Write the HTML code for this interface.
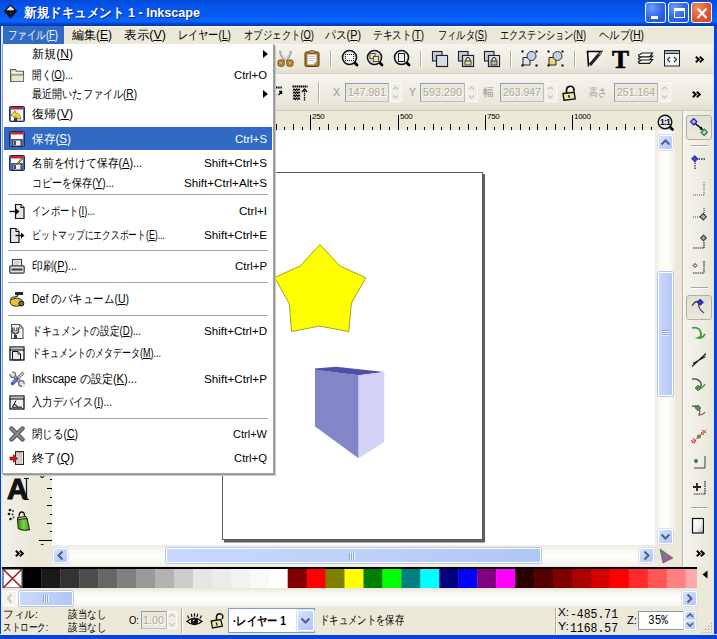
<!DOCTYPE html>
<html><head><meta charset="utf-8">
<style>
*{box-sizing:border-box}
html,body{margin:0;padding:0}
body{width:717px;height:639px;position:relative;overflow:hidden;background:#ECE9D8;font-family:"Liberation Sans",sans-serif;font-size:12px;color:#000}
.a{position:absolute}
i{font-style:normal}
u{text-decoration:underline}
.t{position:absolute;white-space:nowrap;line-height:1;transform-origin:0 0}
#title{left:0;top:0;width:717px;height:26px;background:linear-gradient(#0348d6 0px,#0450e4 3px,#0556ee 8px,#0659f2 15px,#0a63fb 19px,#0a62f8 22px,#0448d0 23.5px,#0036b0 26px)}
#menubar{left:2px;top:26px;width:711px;height:18px;background:linear-gradient(#fbfaf6 0px,#ECE9D8 2px)}
.tb{background:linear-gradient(#F6F5EF,#EAE7DB 80%,#E2DECF)}
#tb1{left:2px;top:44px;width:711px;height:30px;border-bottom:1px solid #d8d4c4}
#tb2{left:2px;top:74px;width:711px;height:37px;border-bottom:1px solid #d2cebd}
#hruler{left:52px;top:111px;width:603px;height:19px;background:#ECE9D8}
#vruler{left:34px;top:130px;width:18px;height:415px;background:#ECE9D8}
#canvas{left:52px;top:130px;width:603px;height:415px;background:#fff}
#vscroll{left:655px;top:130px;width:20px;height:415px;background:linear-gradient(90deg,#F3F1EC,#FEFEFB 40%,#FEFEFB 60%,#F0EEE6)}
#hscroll{left:52px;top:545px;width:603px;height:18px;background:linear-gradient(#F3F1EC,#FEFEFB 40%,#FEFEFB 60%,#F0EEE6)}
#palette{left:2px;top:567px;width:695px;height:21px;background:#000}
#status{left:2px;top:606px;width:711px;height:29px;background:#ECE9D8}
#bl{left:0;top:26px;width:2px;height:613px;background:#0A3FCC;border-right:1px solid #d4ecff}
#br{left:713px;top:26px;width:4px;height:613px;background:#0842DE;border-left:1px solid #d4ecff}
#bb{left:0;top:634px;width:717px;height:5px;background:#0842DE;border-top:1px solid #d4ecff}
#menu{left:2px;top:44px;width:272px;height:430px;background:#fff;border:1px solid #a0a4a4;border-top:0;box-shadow:1px 1px 0 #9a9a9a,2px 2px 0 #c8c8c8}
.wb{width:21px;height:21px;border:1px solid #fff;border-radius:3px;background:radial-gradient(circle at 30% 25%,#6b9cfb,#2f66e8 55%,#1c4fd8)}
.wc{background:radial-gradient(circle at 30% 25%,#f08c68,#e0552e 55%,#cc4420)}
.sc{font-size:11px}
.sepv{width:2px;border-left:1px solid #b2af9f;border-right:1px solid #fff}
.chev{font-size:15px;font-weight:bold}
.lab{font-size:11px;color:#9d9a8a}
.fld{border:1px solid #8d9fb4;border-right-color:#b5c0cc;border-bottom-color:#b5c0cc;background:#EBE8DA}
.fv{font-size:11px;color:#aca899;text-shadow:1px 1px 0 #fff}
.spin{width:12px;height:19px;border:1px solid #fbfbf8;background:#f1efe6}
.abtn{border:1px solid #fff;border-radius:2px;background:linear-gradient(135deg,#d8e4fc,#c1d3fb 50%,#b4c8f6);box-shadow:0 0 0 1px #d6dff5}
.abtn.dis{background:#f4f3ee;box-shadow:none}
.thumb{border:1px solid #fff;border-radius:2px;background:linear-gradient(90deg,#c9d8fc,#bccff8 60%,#b2c6f5);box-shadow:0 0 0 1px #b5c6ef}
.pbtn{border:1px solid #b5b1a0;border-radius:3px;background:linear-gradient(#e2dfd2,#ebe9df)}
.st{font-size:11px}
.mono{font-family:"Liberation Mono",monospace;font-size:12px}
</style></head><body>
<div id="title" class="a">
<svg class="a" style="left:3px;top:4px" width="15" height="15" viewBox="0 0 15 15"><path d="M7.5 0.5 L14 7 L7.5 14.5 L1 7Z" fill="#0d0d12" stroke="#06207a" stroke-width=".8"/><path d="M7.5 2 L11.3 5.8 L10 6.4 L8.8 5.9 L7.5 6.8 L6.2 5.9 L5 6.4 L3.7 5.8Z" fill="#e8e8e0"/><path d="M5 8 Q7.5 9.5 10 8 L7.5 11Z" fill="#2e2e28"/></svg>
<div class="t" style="left:24px;top:6px;font-size:13px;font-weight:bold;color:#fff;text-shadow:1px 1px 0 #0a2a8a;--w:176">新規ドキュメント 1 - Inkscape</div>
<div class="a wb" style="left:645px;top:2px"><div class="a" style="left:5px;top:13px;width:7px;height:3px;background:#fff"></div></div>
<div class="a wb" style="left:668px;top:2px"><div class="a" style="left:5px;top:5px;width:11px;height:10px;border:1px solid #fff;border-top-width:3px"></div></div>
<div class="a wb wc" style="left:691px;top:2px"><svg class="a" style="left:4px;top:5px" width="12" height="11" viewBox="0 0 12 11"><path d="M1.5 0.5 L10.5 10 M10.5 0.5 L1.5 10" stroke="#fff" stroke-width="2.2"/></svg></div>
</div>
<div id="menubar" class="a">
<div class="a" style="left:1px;top:0;width:61px;height:18px;background:#316AC5"></div>
<i class="t" style="left:6px;top:3px;--w:50;color:#fff">ファイル(<u>F</u>)</i>
<i class="t" style="left:70px;top:3px;--w:40">編集(<u>E</u>)</i>
<i class="t" style="left:122px;top:3px;--w:42">表示(<u>V</u>)</i>
<i class="t" style="left:176px;top:3px;--w:53">レイヤー(<u>L</u>)</i>
<i class="t" style="left:242px;top:3px;--w:70">オブジェクト(<u>O</u>)</i>
<i class="t" style="left:323px;top:3px;--w:36">パス(<u>P</u>)</i>
<i class="t" style="left:371px;top:3px;--w:51">テキスト(<u>T</u>)</i>
<i class="t" style="left:436px;top:3px;--w:49">フィルタ(<u>S</u>)</i>
<i class="t" style="left:498px;top:3px;--w:86">エクステンション(<u>N</u>)</i>
<i class="t" style="left:597px;top:3px;--w:45">ヘルプ(<u>H</u>)</i>
</div>
<div id="tb1" class="a tb"></div>
<div id="tb2" class="a tb"></div>
<div id="hruler" class="a"></div>
<!--TB-->
<div class="a sepv" style="left:330px;top:51px;height:16px"></div><div class="a sepv" style="left:420px;top:51px;height:16px"></div><div class="a sepv" style="left:510px;top:51px;height:16px"></div><div class="a sepv" style="left:574px;top:51px;height:16px"></div><svg class="a" style="left:277px;top:50px" width="17" height="17" viewBox="0 0 17 17"><path d="M3.5 1 Q3 5 8.5 10.5 M13.5 1 Q14 5 8.5 10.5" fill="none" stroke="#8d929c" stroke-width="2.4"/><path d="M3.8 1.8 Q3.6 5 8.5 10 M13.2 1.8 Q13.4 5 8.5 10" fill="none" stroke="#f2f4f8" stroke-width=".9"/><rect x="1" y="10" width="6.2" height="6.2" rx="1.8" fill="#c89a30" stroke="#6a4a0a" stroke-width="1"/><rect x="9.8" y="10" width="6.2" height="6.2" rx="1.8" fill="#c89a30" stroke="#6a4a0a" stroke-width="1"/><circle cx="4.1" cy="13.1" r="1.3" fill="#f8e6a0" stroke="#6a4a0a" stroke-width=".6"/><circle cx="12.9" cy="13.1" r="1.3" fill="#f8e6a0" stroke="#6a4a0a" stroke-width=".6"/></svg><svg class="a" style="left:304px;top:50px" width="16" height="17" viewBox="0 0 16 17"><rect x="1" y="2" width="14" height="14.5" rx="1.5" fill="#a87a30" stroke="#5a3c0c" stroke-width="1"/><path d="M3.5 4.5h9v7.5l-2.5 2.5h-6.5z" fill="#ffffff"/><path d="M12.5 12 L10 14.5 L10 12Z" fill="#c8c8c0"/><rect x="5" y="0.8" width="6" height="2.6" rx="1" fill="#caa870" stroke="#5a3c0c" stroke-width=".8"/><path d="M5 6.5h6M5 8.5h6M5 10.5h4.5" stroke="#9aa6b4" stroke-width=".6"/></svg><svg class="a" style="left:341px;top:49px" width="18" height="18" viewBox="0 0 18 18"><path d="M13.5 13.5 L16 16" stroke="#000" stroke-width="2.8" stroke-linecap="round"/><circle cx="8.5" cy="8.5" r="7" fill="#e6e9f2" stroke="#111" stroke-width="1.6"/><rect x="4" y="5" width="9" height="7" fill="#f6f8fc"/><rect x="4" y="5" width="1" height="1" fill="#111"/><rect x="4" y="11" width="1" height="1" fill="#111"/><rect x="6" y="5" width="1" height="1" fill="#111"/><rect x="6" y="11" width="1" height="1" fill="#111"/><rect x="8" y="5" width="1" height="1" fill="#111"/><rect x="8" y="11" width="1" height="1" fill="#111"/><rect x="10" y="5" width="1" height="1" fill="#111"/><rect x="10" y="11" width="1" height="1" fill="#111"/><rect x="12" y="5" width="1" height="1" fill="#111"/><rect x="12" y="11" width="1" height="1" fill="#111"/><rect x="4" y="7" width="1" height="1" fill="#111"/><rect x="4" y="9" width="1" height="1" fill="#111"/><rect x="12" y="7" width="1" height="1" fill="#111"/><rect x="12" y="9" width="1" height="1" fill="#111"/></svg><svg class="a" style="left:366px;top:49px" width="18" height="18" viewBox="0 0 18 18"><path d="M13.5 13.5 L16 16" stroke="#000" stroke-width="2.8" stroke-linecap="round"/><circle cx="8.5" cy="8.5" r="7" fill="#e6e9f2" stroke="#111" stroke-width="1.6"/><circle cx="8.5" cy="8.5" r="6" fill="#c9cde8"/><rect x="4" y="4.5" width="5" height="5" fill="#f2e58a" stroke="#333" stroke-width=".8"/><rect x="7.5" y="7.5" width="5" height="5" fill="#f2e58a" stroke="#333" stroke-width=".8"/></svg><svg class="a" style="left:393px;top:49px" width="18" height="18" viewBox="0 0 18 18"><path d="M13.5 13.5 L16 16" stroke="#000" stroke-width="2.8" stroke-linecap="round"/><circle cx="8.5" cy="8.5" r="7" fill="#e6e9f2" stroke="#111" stroke-width="1.6"/><rect x="5.5" y="4.5" width="6" height="8" fill="#f2f4f8" stroke="#222" stroke-width="1"/></svg><svg class="a" style="left:431px;top:50px" width="18" height="18" viewBox="0 0 18 18"><rect x="1.5" y="1.5" width="9.5" height="9.5" fill="#c5ccd8" stroke="#222" stroke-width="1.1"/><rect x="5.5" y="5.5" width="11" height="11" fill="#d4dcea" stroke="#222" stroke-width="1.2"/><path d="M6.5 6.5h9v9" fill="none" stroke="#fff" stroke-width=".6" opacity=".7"/></svg><svg class="a" style="left:457px;top:50px" width="18" height="18" viewBox="0 0 18 18"><rect x="1.5" y="1.5" width="9.5" height="9.5" fill="#c5ccd8" stroke="#222" stroke-width="1.1"/><rect x="5.5" y="5.5" width="11" height="11" fill="#d4dcea" stroke="#222" stroke-width="1.2"/><path d="M6.5 6.5h9v9" fill="none" stroke="#fff" stroke-width=".6" opacity=".7"/><path d="M9 11v-1.5a2 2 0 0 1 4 0v1.5" fill="none" stroke="#222" stroke-width="1"/><rect x="8" y="11" width="6" height="4" fill="#f0e070" stroke="#222" stroke-width=".8"/></svg><svg class="a" style="left:483px;top:50px" width="18" height="18" viewBox="0 0 18 18"><rect x="1.5" y="1.5" width="9.5" height="9.5" fill="#c5ccd8" stroke="#222" stroke-width="1.1"/><rect x="5.5" y="5.5" width="11" height="11" fill="#d4dcea" stroke="#222" stroke-width="1.2"/><path d="M6.5 6.5h9v9" fill="none" stroke="#fff" stroke-width=".6" opacity=".7"/><path d="M9 11v-1.5a2 2 0 0 1 4 0v1.5" fill="none" stroke="#222" stroke-width="1"/><rect x="8" y="11" width="6" height="4" fill="#a8c888" stroke="#222" stroke-width=".8"/></svg><svg class="a" style="left:521px;top:50px" width="17" height="17" viewBox="0 0 17 17"><path d="M2 7.5h7v7.5h-7z" fill="#dfe5ee" stroke="#222" stroke-width="1"/><circle cx="10.5" cy="6" r="4.5" fill="#c3d0e6" stroke="#333" stroke-width="1"/><rect x="0.5" y="0.5" width="2" height="2" fill="#000"/><rect x="14.5" y="0.5" width="2" height="2" fill="#000"/><rect x="0.5" y="14.5" width="2" height="2" fill="#000"/><rect x="14.5" y="14.5" width="2" height="2" fill="#000"/></svg><svg class="a" style="left:547px;top:50px" width="17" height="17" viewBox="0 0 17 17"><path d="M2 7.5h7v7.5h-7z" fill="#f0d878" stroke="#222" stroke-width="1"/><circle cx="10.5" cy="6" r="4.5" fill="#c3d0e6" stroke="#333" stroke-width="1"/><rect x="0.5" y="0.5" width="2" height="2" fill="#000"/><rect x="14.5" y="0.5" width="2" height="2" fill="#000"/><rect x="0.5" y="14.5" width="2" height="2" fill="#000"/><rect x="14.5" y="14.5" width="2" height="2" fill="#000"/></svg><svg class="a" style="left:586px;top:50px" width="17" height="17" viewBox="0 0 17 17"><path d="M1.5 1.5h14l-13 14z" fill="#fdfdfd" stroke="#000" stroke-width="1.6"/><path d="M15.5 1.5 L2.5 15.5 L15.5 15.5z" fill="#eee"/><path d="M15 2 L4 15" stroke="#222" stroke-width="3"/><path d="M15.5 1.5 L12 5 L15 4z" fill="#e8c020"/></svg><div class="t" style="left:612px;top:47px;font-family:'Liberation Serif',serif;font-weight:bold;font-size:25.5px;-webkit-text-stroke:.6px #000">T</div><svg class="a" style="left:637px;top:50px" width="17" height="17" viewBox="0 0 17 17"><path d="M1.5 11.7 L5.2 9.5 H15.5 L12.5 13.3 H2.2z" fill="#fafafa" stroke="#1a1a1a" stroke-width="1.2"/><path d="M1.5 8.4 L5.2 6.2 H15.5 L12.5 10.0 H2.2z" fill="#fafafa" stroke="#1a1a1a" stroke-width="1.2"/><path d="M1.5 5.2 L5.2 3 H15.5 L12.5 6.8 H2.2z" fill="#fafafa" stroke="#1a1a1a" stroke-width="1.2"/></svg><svg class="a" style="left:664px;top:50px" width="17" height="17" viewBox="0 0 17 17"><rect x="0.5" y="0.5" width="15" height="15.5" fill="#f4f4f6" stroke="#222" stroke-width="1"/><rect x="1" y="1" width="14" height="2" fill="#9aa8c0"/><path d="M1 3.5h14" stroke="#222" stroke-width=".9"/><path d="M6 7 L3.5 9.5 L6 12 M10 7 L12.5 9.5 L10 12" fill="none" stroke="#333" stroke-width="1.2"/></svg><svg class="a" style="left:695px;top:56px" width="9" height="7" viewBox="0 0 9 7"><path d="M0.8 0.8 L3.8 3.5 L0.8 6.2 M4.8 0.8 L7.8 3.5 L4.8 6.2" fill="none" stroke="#000" stroke-width="1.9"/></svg><div class="a sepv" style="left:318px;top:82px;height:21px"></div><svg class="a" style="left:274px;top:86px" width="9" height="12" viewBox="0 0 9 12"><path d="M0 1.5h8" stroke="#000" stroke-width="2" stroke-dasharray="1.2 .6"/><path d="M1 10 L2 8.5 M4.5 9 L7.5 6 M5 5.5h2.5v2.5" stroke="#000" stroke-width="1.3" fill="none"/></svg><svg class="a" style="left:292px;top:85px" width="16" height="16" viewBox="0 0 16 16"><path d="M0.5 1.5h15" stroke="#000" stroke-width="2" stroke-dasharray="1.5 .5"/><path d="M1 5.5 l1.2 -1.5 1.2 1.5 1.2 -1.5 1.2 1.5 1.2 -1.5 1.2 1.5 M1 8.5 l1.2 -1.5 1.2 1.5 1.2 -1.5 1.2 1.5 1.2 -1.5 1.2 1.5 M1 11.5 l1.2 -1.5 1.2 1.5 1.2 -1.5 1.2 1.5 1.2 -1.5 1.2 1.5 M1 14.5 l1.2 -1.5 1.2 1.5 1.2 -1.5 1.2 1.5 1.2 -1.5 1.2 1.5 " fill="none" stroke="#000" stroke-width="1.1"/><path d="M12.5 15.5V5" stroke="#000" stroke-width="1.3" stroke-dasharray="1.5 .6"/><path d="M10 7 L12.5 4 L15 7" fill="none" stroke="#000" stroke-width="1.3"/></svg><i class="t lab" style="left:333px;top:87px;--w:7">X</i><div class="a fld" style="left:345px;top:83px;width:44px;height:19px"></div><i class="t fv" style="left:348px;top:87px;--w:38">147.981</i><div class="a spin" style="left:390px;top:83px"></div><svg class="a" style="left:392px;top:85px" width="7" height="15" viewBox="0 0 7 15"><path d="M1 4.5 L3.5 2 L6 4.5 M1 10.5 L3.5 13 L6 10.5" fill="none" stroke="#c8c6ba" stroke-width="1.2"/></svg><i class="t lab" style="left:409px;top:87px;--w:7">Y</i><div class="a fld" style="left:420px;top:83px;width:45px;height:19px"></div><i class="t fv" style="left:423px;top:87px;--w:39">593.290</i><div class="a spin" style="left:466px;top:83px"></div><svg class="a" style="left:468px;top:85px" width="7" height="15" viewBox="0 0 7 15"><path d="M1 4.5 L3.5 2 L6 4.5 M1 10.5 L3.5 13 L6 10.5" fill="none" stroke="#c8c6ba" stroke-width="1.2"/></svg><i class="t lab" style="left:483px;top:87px;--w:11">幅</i><div class="a fld" style="left:500px;top:83px;width:44px;height:19px"></div><i class="t fv" style="left:503px;top:87px;--w:38">263.947</i><div class="a spin" style="left:545px;top:83px"></div><svg class="a" style="left:547px;top:85px" width="7" height="15" viewBox="0 0 7 15"><path d="M1 4.5 L3.5 2 L6 4.5 M1 10.5 L3.5 13 L6 10.5" fill="none" stroke="#c8c6ba" stroke-width="1.2"/></svg><i class="t lab" style="left:589px;top:87px;--w:17">高さ</i><div class="a fld" style="left:614px;top:83px;width:44px;height:19px"></div><i class="t fv" style="left:617px;top:87px;--w:38">251.164</i><div class="a spin" style="left:659px;top:83px"></div><svg class="a" style="left:661px;top:85px" width="7" height="15" viewBox="0 0 7 15"><path d="M1 4.5 L3.5 2 L6 4.5 M1 10.5 L3.5 13 L6 10.5" fill="none" stroke="#c8c6ba" stroke-width="1.2"/></svg><svg class="a" style="left:562px;top:85px" width="15" height="16" viewBox="0 0 15 16"><path d="M4.5 8 V5 A3.8 3.8 0 0 1 12 4.2 L12 6.5" fill="none" stroke="#111" stroke-width="1.7"/><path d="M1 8.5 L12.2 7.2 L13.2 14 L2 15.3Z" fill="#ede59a" stroke="#111" stroke-width="1.4"/><path d="M6.8 10.2 L7.2 12.6" stroke="#222" stroke-width="1.6"/></svg><svg class="a" style="left:692px;top:91px" width="9" height="7" viewBox="0 0 9 7"><path d="M0.8 0.8 L3.8 3.5 L0.8 6.2 M4.8 0.8 L7.8 3.5 L4.8 6.2" fill="none" stroke="#000" stroke-width="1.9"/></svg>
<!--/TB-->
<div id="vruler" class="a"></div>
<div id="canvas" class="a"></div>
<!--CV-->
<svg class="a" style="left:52px;top:111px" width="603" height="19" viewBox="0 0 603 19"><path d="M5.5 16V19" stroke="#000" stroke-width="1"/><path d="M14.5 13V19" stroke="#000" stroke-width="1"/><path d="M23.5 16V19" stroke="#000" stroke-width="1"/><path d="M32.5 13V19" stroke="#000" stroke-width="1"/><path d="M40.5 16V19" stroke="#000" stroke-width="1"/><path d="M49.5 13V19" stroke="#000" stroke-width="1"/><path d="M58.5 16V19" stroke="#000" stroke-width="1"/><path d="M66.5 13V19" stroke="#000" stroke-width="1"/><path d="M75.5 16V19" stroke="#000" stroke-width="1"/><path d="M84.5 4V19" stroke="#000" stroke-width="1"/><text x="86.0" y="7.8" font-size="8" font-family="Liberation Sans" letter-spacing="-0.3">-250</text><path d="M93.5 16V19" stroke="#000" stroke-width="1"/><path d="M101.5 13V19" stroke="#000" stroke-width="1"/><path d="M110.5 16V19" stroke="#000" stroke-width="1"/><path d="M119.5 13V19" stroke="#000" stroke-width="1"/><path d="M128.5 16V19" stroke="#000" stroke-width="1"/><path d="M136.5 13V19" stroke="#000" stroke-width="1"/><path d="M145.5 16V19" stroke="#000" stroke-width="1"/><path d="M154.5 13V19" stroke="#000" stroke-width="1"/><path d="M162.5 16V19" stroke="#000" stroke-width="1"/><path d="M171.5 4V19" stroke="#000" stroke-width="1"/><text x="173.0" y="7.8" font-size="8" font-family="Liberation Sans" letter-spacing="-0.3">0</text><path d="M180.5 16V19" stroke="#000" stroke-width="1"/><path d="M189.5 13V19" stroke="#000" stroke-width="1"/><path d="M197.5 16V19" stroke="#000" stroke-width="1"/><path d="M206.5 13V19" stroke="#000" stroke-width="1"/><path d="M215.5 16V19" stroke="#000" stroke-width="1"/><path d="M224.5 13V19" stroke="#000" stroke-width="1"/><path d="M232.5 16V19" stroke="#000" stroke-width="1"/><path d="M241.5 13V19" stroke="#000" stroke-width="1"/><path d="M250.5 16V19" stroke="#000" stroke-width="1"/><path d="M258.5 4V19" stroke="#000" stroke-width="1"/><text x="260.0" y="7.8" font-size="8" font-family="Liberation Sans" letter-spacing="-0.3">250</text><path d="M267.5 16V19" stroke="#000" stroke-width="1"/><path d="M276.5 13V19" stroke="#000" stroke-width="1"/><path d="M285.5 16V19" stroke="#000" stroke-width="1"/><path d="M293.5 13V19" stroke="#000" stroke-width="1"/><path d="M302.5 16V19" stroke="#000" stroke-width="1"/><path d="M311.5 13V19" stroke="#000" stroke-width="1"/><path d="M320.5 16V19" stroke="#000" stroke-width="1"/><path d="M328.5 13V19" stroke="#000" stroke-width="1"/><path d="M337.5 16V19" stroke="#000" stroke-width="1"/><path d="M346.5 4V19" stroke="#000" stroke-width="1"/><text x="348.0" y="7.8" font-size="8" font-family="Liberation Sans" letter-spacing="-0.3">500</text><path d="M355.5 16V19" stroke="#000" stroke-width="1"/><path d="M363.5 13V19" stroke="#000" stroke-width="1"/><path d="M372.5 16V19" stroke="#000" stroke-width="1"/><path d="M381.5 13V19" stroke="#000" stroke-width="1"/><path d="M389.5 16V19" stroke="#000" stroke-width="1"/><path d="M398.5 13V19" stroke="#000" stroke-width="1"/><path d="M407.5 16V19" stroke="#000" stroke-width="1"/><path d="M416.5 13V19" stroke="#000" stroke-width="1"/><path d="M424.5 16V19" stroke="#000" stroke-width="1"/><path d="M433.5 4V19" stroke="#000" stroke-width="1"/><text x="435.0" y="7.8" font-size="8" font-family="Liberation Sans" letter-spacing="-0.3">750</text><path d="M442.5 16V19" stroke="#000" stroke-width="1"/><path d="M451.5 13V19" stroke="#000" stroke-width="1"/><path d="M459.5 16V19" stroke="#000" stroke-width="1"/><path d="M468.5 13V19" stroke="#000" stroke-width="1"/><path d="M477.5 16V19" stroke="#000" stroke-width="1"/><path d="M485.5 13V19" stroke="#000" stroke-width="1"/><path d="M494.5 16V19" stroke="#000" stroke-width="1"/><path d="M503.5 13V19" stroke="#000" stroke-width="1"/><path d="M512.5 16V19" stroke="#000" stroke-width="1"/><path d="M520.5 4V19" stroke="#000" stroke-width="1"/><text x="522.0" y="7.8" font-size="8" font-family="Liberation Sans" letter-spacing="-0.3">1000</text><path d="M529.5 16V19" stroke="#000" stroke-width="1"/><path d="M538.5 13V19" stroke="#000" stroke-width="1"/><path d="M547.5 16V19" stroke="#000" stroke-width="1"/><path d="M555.5 13V19" stroke="#000" stroke-width="1"/><path d="M564.5 16V19" stroke="#000" stroke-width="1"/><path d="M573.5 13V19" stroke="#000" stroke-width="1"/><path d="M582.5 16V19" stroke="#000" stroke-width="1"/><path d="M590.5 13V19" stroke="#000" stroke-width="1"/><path d="M599.5 16V19" stroke="#000" stroke-width="1"/></svg><svg class="a" style="left:34px;top:130px" width="18" height="415" viewBox="0 0 18 415"><path d="M13 9.5H18" stroke="#000" stroke-width="1"/><path d="M16 17.5H18" stroke="#000" stroke-width="1"/><path d="M13 26.5H18" stroke="#000" stroke-width="1"/><path d="M16 35.5H18" stroke="#000" stroke-width="1"/><path d="M13 44.5H18" stroke="#000" stroke-width="1"/><path d="M16 52.5H18" stroke="#000" stroke-width="1"/><path d="M5 61.5H18" stroke="#000" stroke-width="1"/><text x="6" y="69.5" font-size="8" font-family="Liberation Sans" font-weight="bold">1</text><text x="6" y="77.5" font-size="8" font-family="Liberation Sans" font-weight="bold">0</text><text x="6" y="85.5" font-size="8" font-family="Liberation Sans" font-weight="bold">0</text><text x="6" y="93.5" font-size="8" font-family="Liberation Sans" font-weight="bold">0</text><path d="M16 70.5H18" stroke="#000" stroke-width="1"/><path d="M13 78.5H18" stroke="#000" stroke-width="1"/><path d="M16 87.5H18" stroke="#000" stroke-width="1"/><path d="M13 96.5H18" stroke="#000" stroke-width="1"/><path d="M16 105.5H18" stroke="#000" stroke-width="1"/><path d="M13 113.5H18" stroke="#000" stroke-width="1"/><path d="M16 122.5H18" stroke="#000" stroke-width="1"/><path d="M13 131.5H18" stroke="#000" stroke-width="1"/><path d="M16 140.5H18" stroke="#000" stroke-width="1"/><path d="M5 148.5H18" stroke="#000" stroke-width="1"/><text x="6" y="156.5" font-size="8" font-family="Liberation Sans" font-weight="bold">7</text><text x="6" y="164.5" font-size="8" font-family="Liberation Sans" font-weight="bold">5</text><text x="6" y="172.5" font-size="8" font-family="Liberation Sans" font-weight="bold">0</text><path d="M16 157.5H18" stroke="#000" stroke-width="1"/><path d="M13 166.5H18" stroke="#000" stroke-width="1"/><path d="M16 174.5H18" stroke="#000" stroke-width="1"/><path d="M13 183.5H18" stroke="#000" stroke-width="1"/><path d="M16 192.5H18" stroke="#000" stroke-width="1"/><path d="M13 201.5H18" stroke="#000" stroke-width="1"/><path d="M16 209.5H18" stroke="#000" stroke-width="1"/><path d="M13 218.5H18" stroke="#000" stroke-width="1"/><path d="M16 227.5H18" stroke="#000" stroke-width="1"/><path d="M5 236.5H18" stroke="#000" stroke-width="1"/><text x="6" y="244.5" font-size="8" font-family="Liberation Sans" font-weight="bold">5</text><text x="6" y="252.5" font-size="8" font-family="Liberation Sans" font-weight="bold">0</text><text x="6" y="260.5" font-size="8" font-family="Liberation Sans" font-weight="bold">0</text><path d="M16 244.5H18" stroke="#000" stroke-width="1"/><path d="M13 253.5H18" stroke="#000" stroke-width="1"/><path d="M16 262.5H18" stroke="#000" stroke-width="1"/><path d="M13 271.5H18" stroke="#000" stroke-width="1"/><path d="M16 279.5H18" stroke="#000" stroke-width="1"/><path d="M13 288.5H18" stroke="#000" stroke-width="1"/><path d="M16 297.5H18" stroke="#000" stroke-width="1"/><path d="M13 305.5H18" stroke="#000" stroke-width="1"/><path d="M16 314.5H18" stroke="#000" stroke-width="1"/><path d="M5 323.5H18" stroke="#000" stroke-width="1"/><text x="6" y="331.5" font-size="8" font-family="Liberation Sans" font-weight="bold">2</text><text x="6" y="339.5" font-size="8" font-family="Liberation Sans" font-weight="bold">5</text><text x="6" y="347.5" font-size="8" font-family="Liberation Sans" font-weight="bold">0</text><path d="M16 332.5H18" stroke="#000" stroke-width="1"/><path d="M13 340.5H18" stroke="#000" stroke-width="1"/><path d="M16 349.5H18" stroke="#000" stroke-width="1"/><path d="M13 358.5H18" stroke="#000" stroke-width="1"/><path d="M16 367.5H18" stroke="#000" stroke-width="1"/><path d="M13 375.5H18" stroke="#000" stroke-width="1"/><path d="M16 384.5H18" stroke="#000" stroke-width="1"/><path d="M13 393.5H18" stroke="#000" stroke-width="1"/><path d="M16 401.5H18" stroke="#000" stroke-width="1"/><path d="M5 410.5H18" stroke="#000" stroke-width="1"/><text x="6" y="418.5" font-size="8" font-family="Liberation Sans" font-weight="bold">0</text></svg><svg class="a" style="left:52px;top:130px" width="603" height="415" viewBox="0 0 603 415"><rect x="170.5" y="42.5" width="260" height="367" fill="#fff" stroke="#5a5a5a" stroke-width="1"/><path d="M430 44H433V412.5H172V409.5H430Z" fill="#5e5e5e"/><polygon points="267.9,114.6 288.1,136.1 313.8,147.8 299.4,173.2 296.8,201.5 267.6,196.1 239.6,201.5 237.3,173.8 222.6,147.5 248.0,136.1" fill="#ffff00" stroke="#8a8a10" stroke-width="0.8"/><polygon points="263.0,238.5 284.0,236.8 332.3,242.0 306.6,245.3 263.0,240.0" fill="#4c50a6"/><polygon points="263.0,239.5 306.6,245.3 306.6,328.3 263.0,296.4" fill="#8286c6"/><polygon points="306.6,245.3 332.3,242.0 332.3,311.9 306.6,328.3" fill="#d3d3f8"/></svg>
<!--/CV-->
<div id="status" class="a"></div>
<!--RS-->
<div class="a" style="left:655px;top:130px;width:20px;height:415px;background:linear-gradient(90deg,#EEEBDF,#FBFAF5 30%,#FEFEFC 60%,#F1EFE6)"></div><svg class="a" style="left:657px;top:114px" width="17" height="17" viewBox="0 0 17 17"><path d="M12 12 L15.5 15.5" stroke="#000" stroke-width="2.6" stroke-linecap="round"/><circle cx="8" cy="8" r="6.8" fill="#e8eaf0" stroke="#111" stroke-width="1.4"/><text x="3" y="11.2" font-size="8.5" font-weight="bold" font-family="Liberation Sans" letter-spacing="-0.8">1:1</text></svg><div class="a abtn" style="left:658px;top:135px;width:15px;height:15px"></div><svg class="a" style="left:658px;top:135px" width="15" height="15" viewBox="0 0 15 15"><path d="M3.5 9.5 L7.5 5.5 L11.5 9.5" fill="none" stroke="#4d6185" stroke-width="2"/></svg><div class="a abtn" style="left:658px;top:529px;width:15px;height:15px"></div><svg class="a" style="left:658px;top:529px" width="15" height="15" viewBox="0 0 15 15"><path d="M3.5 5.5 L7.5 9.5 L11.5 5.5" fill="none" stroke="#4d6185" stroke-width="2"/></svg><div class="a thumb" style="left:658px;top:272px;width:15px;height:124px"></div><svg class="a" style="left:660px;top:329px" width="11" height="8" viewBox="0 0 11 8"><path d="M2 1.5h7M2 3.5h7M2 5.5h7" stroke="#8fa5d8" stroke-width="1"/><path d="M2 2.5h7M2 4.5h7M2 6.5h7" stroke="#eef3ff" stroke-width="1"/></svg><div class="a" style="left:52px;top:545px;width:603px;height:21px;background:linear-gradient(#EEEBDF,#FBFAF5 30%,#FEFEFC 60%,#F1EFE6)"></div><div class="a abtn" style="left:53px;top:548px;width:15px;height:15px"></div><svg class="a" style="left:53px;top:548px" width="15" height="15" viewBox="0 0 15 15"><path d="M9.5 3.5 L5.5 7.5 L9.5 11.5" fill="none" stroke="#4d6185" stroke-width="2"/></svg><div class="a abtn" style="left:639px;top:548px;width:15px;height:15px"></div><svg class="a" style="left:639px;top:548px" width="15" height="15" viewBox="0 0 15 15"><path d="M5.5 3.5 L9.5 7.5 L5.5 11.5" fill="none" stroke="#4d6185" stroke-width="2"/></svg><div class="a thumb" style="left:166px;top:548px;width:375px;height:15px"></div><svg class="a" style="left:348px;top:551px" width="8" height="11" viewBox="0 0 8 11"><path d="M1.5 2v7M3.5 2v7M5.5 2v7" stroke="#8fa5d8" stroke-width="1"/><path d="M2.5 2v7M4.5 2v7M6.5 2v7" stroke="#eef3ff" stroke-width="1"/></svg><svg class="a" style="left:659px;top:548px" width="15" height="16" viewBox="0 0 15 16"><defs><linearGradient id="cm" x1="0" y1="0" x2="1" y2="1"><stop offset="0" stop-color="#3aa040"/><stop offset=".5" stop-color="#8a6aa8"/><stop offset="1" stop-color="#d0403a"/></linearGradient></defs><path d="M1 1 L14 10 L4 15Z" fill="url(#cm)" stroke="#555" stroke-width=".6"/></svg><div class="a" style="left:682px;top:111px;width:31px;height:456px;background:linear-gradient(90deg,#F4F3EE,#EFEDE4 60%,#E9E6D8)"></div><div class="a" style="left:682px;top:111px;width:1px;height:456px;background:#b9b5a2"></div><div class="a" style="left:683px;top:111px;width:1px;height:456px;background:#fbfaf4"></div><div class="a pbtn" style="left:686px;top:115px;width:26px;height:25px"></div><div class="a pbtn" style="left:686px;top:295px;width:26px;height:25px"></div><div class="a" style="left:691px;top:145px;width:17px;height:1px;background:#aca899"></div><div class="a" style="left:691px;top:146px;width:17px;height:1px;background:#fff"></div><div class="a" style="left:691px;top:287px;width:17px;height:1px;background:#aca899"></div><div class="a" style="left:691px;top:288px;width:17px;height:1px;background:#fff"></div><div class="a" style="left:691px;top:507px;width:17px;height:1px;background:#aca899"></div><div class="a" style="left:691px;top:508px;width:17px;height:1px;background:#fff"></div><svg class="a" style="left:690px;top:118px" width="18" height="18" viewBox="0 0 18 18"><path d="M4.5 5 L12 11" stroke="#000" stroke-width="1.6"/><path d="M11.5 8.5 L13 12 L9.5 11.5Z" fill="#000"/><rect x="1.5" y="1.5" width="4.5" height="4.5" transform="rotate(45 3.75 3.75)" fill="#aab0f0" stroke="#2020c0" stroke-width="1.2"/><rect x="12" y="12" width="4.5" height="4.5" transform="rotate(45 14.25 14.25)" fill="#b8e0b8" stroke="#2a7a3a" stroke-width="1.2"/></svg><svg class="a" style="left:690px;top:155px" width="18" height="18" viewBox="0 0 18 18"><path d="M6 4h10" stroke="#333" stroke-width="1.3" stroke-dasharray="1.5 1"/><path d="M5 5v10" stroke="#333" stroke-width="1.3" stroke-dasharray="1.5 1"/><rect x="2.5" y="1.5" width="4.5" height="4.5" transform="rotate(45 4.75 3.75)" fill="#4040d0" stroke="#2020a0" stroke-width=".8"/></svg><svg class="a" style="left:690px;top:180px" width="18" height="18" viewBox="0 0 18 18"><path d="M14 2v13M3 15h11" stroke="#555" stroke-width="1" stroke-dasharray="1 1"/></svg><svg class="a" style="left:690px;top:207px" width="18" height="18" viewBox="0 0 18 18"><path d="M14 1v6M3 10h8" stroke="#444" stroke-width="1.2" stroke-dasharray="1 1"/><rect x="11" y="7.5" width="4.5" height="4.5" transform="rotate(45 13.25 9.75)" fill="#aaa" stroke="#333" stroke-width="1"/></svg><svg class="a" style="left:690px;top:233px" width="18" height="16" viewBox="0 0 18 16"><path d="M14 9v6M3 15h11" stroke="#222" stroke-width="1.2" stroke-dasharray="1.5 .8"/><rect x="11.5" y="3" width="4" height="4" transform="rotate(45 13.5 5)" fill="#aaa" stroke="#333" stroke-width="1"/></svg><svg class="a" style="left:690px;top:258px" width="18" height="16" viewBox="0 0 18 16"><path d="M14 3v12M3 15h11" stroke="#222" stroke-width="1.2" stroke-dasharray="1.5 .8"/><path d="M5 5.5 L7 7.5 L5 9.5 L3 7.5Z" fill="#ddd" stroke="#333" stroke-width="1"/></svg><svg class="a" style="left:690px;top:298px" width="18" height="18" viewBox="0 0 18 18"><path d="M3 7 Q5 2 9 4 Q7 10 14 15" fill="none" stroke="#555" stroke-width="1.3"/><path d="M2 8 Q4 3 9 4" fill="none" stroke="#335" stroke-width="1"/><rect x="8" y="2" width="4.5" height="4.5" transform="rotate(45 10.25 4.25)" fill="#3030d0" stroke="#1a1a90" stroke-width=".8"/></svg><svg class="a" style="left:690px;top:325px" width="18" height="16" viewBox="0 0 18 16"><path d="M2 3 Q9 1 11 8 Q11.5 12 8 13 Q12 14 15 9" fill="none" stroke="#3aa03a" stroke-width="1.8"/></svg><svg class="a" style="left:690px;top:351px" width="18" height="17" viewBox="0 0 18 17"><path d="M2 15.5 L16 2.5 M3 12.5 L15.5 5.5" fill="none" stroke="#1a1a1a" stroke-width="1.1"/></svg><svg class="a" style="left:690px;top:377px" width="18" height="17" viewBox="0 0 18 17"><path d="M2 2 Q8 1 11 6 Q12 10 8 12" fill="none" stroke="#444" stroke-width="1.3"/><path d="M8 12 Q13 11 15 7" fill="none" stroke="#3a9a3a" stroke-width="1.4"/><rect x="6" y="9" width="4" height="4" transform="rotate(45 8 11)" fill="#4a9a5a" stroke="#2a6a3a" stroke-width=".8"/></svg><svg class="a" style="left:690px;top:402px" width="18" height="16" viewBox="0 0 18 16"><path d="M2 4 L8 5 Q11 8 9 13 Q13 13 15 10" fill="none" stroke="#8a5a5a" stroke-width="1.3"/><path d="M4 4 L9 4" stroke="#2a8a3a" stroke-width="1.3"/><rect x="6" y="4" width="4" height="4" transform="rotate(45 8 6)" fill="#4a9a5a" stroke="#2a6a3a" stroke-width=".8"/></svg><svg class="a" style="left:690px;top:428px" width="18" height="17" viewBox="0 0 18 17"><path d="M2 15 L16 2" stroke="#e03030" stroke-width="1.2" stroke-dasharray="2 1"/><path d="M1 12 L5 15 M3 10 L6 14 M12 2 L16 5 M11 4 L14 7" stroke="#d02020" stroke-width="1"/><circle cx="9" cy="8.5" r="2" fill="#3a9a4a"/></svg><svg class="a" style="left:690px;top:455px" width="18" height="14" viewBox="0 0 18 14"><path d="M15 1v12M4 13h11" stroke="#444" stroke-width="1"/><circle cx="6" cy="6" r="1.6" fill="#5a9a5a" stroke="#2a5a2a" stroke-width=".8"/></svg><svg class="a" style="left:690px;top:480px" width="18" height="16" viewBox="0 0 18 16"><path d="M15 1v13M4 14h11" stroke="#222" stroke-width="1.2" stroke-dasharray="1.5 .8"/><path d="M3 7h8M7 3v8" stroke="#222" stroke-width="1.8"/></svg><svg class="a" style="left:690px;top:517px" width="14" height="18" viewBox="0 0 14 18"><defs><linearGradient id="wsq" x1="0" y1="0" x2="1" y2="1"><stop offset="0" stop-color="#fff"/><stop offset=".6" stop-color="#f0f0f0"/><stop offset="1" stop-color="#a8a8a8"/></linearGradient></defs><rect x="2.5" y="1.5" width="11" height="14.5" fill="url(#wsq)" stroke="#111" stroke-width="1.2"/></svg><svg class="a" style="left:696px;top:550px" width="9" height="7" viewBox="0 0 9 7"><path d="M0.8 0.8 L3.8 3.5 L0.8 6.2 M4.8 0.8 L7.8 3.5 L4.8 6.2" fill="none" stroke="#000" stroke-width="1.9"/></svg><div class="a" style="left:2px;top:111px;width:32px;height:456px;background:linear-gradient(90deg,#F3F1EA,#EFEDE3 40%,#EAE7D8)"></div><div class="t" style="left:7px;top:475px;font-size:29px;font-weight:bold;color:#111;-webkit-text-stroke:1px #111">A</div><svg class="a" style="left:23px;top:477px" width="8" height="24" viewBox="0 0 8 24"><path d="M1 1.5h5M1 22.5h5M3.5 1.5v21" stroke="#111" stroke-width="1.2"/></svg><svg class="a" style="left:6px;top:506px" width="26" height="26" viewBox="0 0 26 26"><defs><linearGradient id="spr" x1="0" y1="0" x2="1" y2="0"><stop offset="0" stop-color="#3a8a18"/><stop offset=".5" stop-color="#7ad048"/><stop offset="1" stop-color="#4aa020"/></linearGradient></defs><circle cx="4" cy="4" r="1.3" fill="#111"/><circle cx="3" cy="8" r="1.3" fill="#111"/><circle cx="4.5" cy="13" r="1.3" fill="#111"/><circle cx="7" cy="5" r="1" fill="#333"/><circle cx="6.5" cy="8.5" r="1" fill="#333"/><circle cx="7.5" cy="11.5" r="1" fill="#444"/><path d="M13 10.5 Q13 6 15.8 6 Q18.5 6 18.5 10" fill="#f4f0d0" stroke="#111" stroke-width="1.3"/><path d="M11.5 11.5 L20 10.5 L21 13 L12 14Z" fill="#ddd6a0" stroke="#111" stroke-width="1"/><path d="M11.5 13.5 L21 12.5 L23.5 23.5 Q18 25.5 12.3 22.5Z" fill="url(#spr)" stroke="#14300a" stroke-width="1.1"/></svg><svg class="a" style="left:15px;top:550px" width="9" height="7" viewBox="0 0 9 7"><path d="M0.8 0.8 L3.8 3.5 L0.8 6.2 M4.8 0.8 L7.8 3.5 L4.8 6.2" fill="none" stroke="#000" stroke-width="1.9"/></svg><svg class="a" style="left:2px;top:567px" width="695" height="21" viewBox="0 0 695 21"><rect x="0" y="0" width="695" height="21" fill="#ECE9D8"/><rect x="0" y="0" width="695" height="2" fill="#000"/><rect x="20.40" y="2" width="19.25" height="19" fill="#000000"/><rect x="39.35" y="2" width="19.25" height="19" fill="#1A1A1A"/><rect x="58.30" y="2" width="19.25" height="19" fill="#333333"/><rect x="77.25" y="2" width="19.25" height="19" fill="#4D4D4D"/><rect x="96.20" y="2" width="19.25" height="19" fill="#666666"/><rect x="115.15" y="2" width="19.25" height="19" fill="#808080"/><rect x="134.10" y="2" width="19.25" height="19" fill="#999999"/><rect x="153.05" y="2" width="19.25" height="19" fill="#B3B3B3"/><rect x="172.00" y="2" width="19.25" height="19" fill="#CCCCCC"/><rect x="190.95" y="2" width="19.25" height="19" fill="#E6E6E6"/><rect x="209.90" y="2" width="19.25" height="19" fill="#ECECEC"/><rect x="228.85" y="2" width="19.25" height="19" fill="#F2F2F2"/><rect x="247.80" y="2" width="19.25" height="19" fill="#F9F9F9"/><rect x="266.75" y="2" width="19.25" height="19" fill="#FFFFFF"/><rect x="285.70" y="2" width="19.25" height="19" fill="#800000"/><rect x="304.65" y="2" width="19.25" height="19" fill="#FF0000"/><rect x="323.60" y="2" width="19.25" height="19" fill="#808000"/><rect x="342.55" y="2" width="19.25" height="19" fill="#FFFF00"/><rect x="361.50" y="2" width="19.25" height="19" fill="#008000"/><rect x="380.45" y="2" width="19.25" height="19" fill="#00FF00"/><rect x="399.40" y="2" width="19.25" height="19" fill="#008080"/><rect x="418.35" y="2" width="19.25" height="19" fill="#00FFFF"/><rect x="437.30" y="2" width="19.25" height="19" fill="#000080"/><rect x="456.25" y="2" width="19.25" height="19" fill="#0000FF"/><rect x="475.20" y="2" width="19.25" height="19" fill="#800080"/><rect x="494.15" y="2" width="19.25" height="19" fill="#FF00FF"/><rect x="513.10" y="2" width="19.25" height="19" fill="#2B0000"/><rect x="532.05" y="2" width="19.25" height="19" fill="#550000"/><rect x="551.00" y="2" width="19.25" height="19" fill="#800000"/><rect x="569.95" y="2" width="19.25" height="19" fill="#AA0000"/><rect x="588.90" y="2" width="19.25" height="19" fill="#D40000"/><rect x="607.85" y="2" width="19.25" height="19" fill="#FF0000"/><rect x="626.80" y="2" width="19.25" height="19" fill="#FF2A2A"/><rect x="645.75" y="2" width="19.25" height="19" fill="#FF5555"/><rect x="664.70" y="2" width="19.25" height="19" fill="#FF8080"/><rect x="683.65" y="2" width="19.25" height="19" fill="#FFAAAA"/><rect x="1" y="2" width="19" height="19" fill="#fff"/><path d="M1.5 2.5 L19.5 20.5 M19.5 2.5 L1.5 20.5" stroke="#a01818" stroke-width="1.5"/><rect x="1" y="2" width="19" height="19" fill="none" stroke="#222" stroke-width="1"/></svg><svg class="a" style="left:702px;top:570px" width="6" height="9" viewBox="0 0 6 9"><path d="M5.5 0.5 L0.5 4.5 L5.5 8.5Z" fill="#000"/></svg><div class="a" style="left:2px;top:589px;width:695px;height:18px;background:linear-gradient(#EEEBDF,#FBFAF5 30%,#FEFEFC 60%,#F1EFE6)"></div><div class="a abtn dis" style="left:3px;top:591px;width:14px;height:15px"></div><svg class="a" style="left:3px;top:591px" width="14" height="15" viewBox="0 0 14 15"><path d="M8.5 3.5 L5 7.5 L8.5 11.5" fill="none" stroke="#c9c7ba" stroke-width="2"/></svg><div class="a thumb" style="left:19px;top:591px;width:54px;height:15px"></div><svg class="a" style="left:42px;top:594px" width="8" height="10" viewBox="0 0 8 10"><path d="M1.5 1v7M3.5 1v7M5.5 1v7" stroke="#8fa5d8" stroke-width="1"/><path d="M2.5 1v7M4.5 1v7M6.5 1v7" stroke="#eef3ff" stroke-width="1"/></svg><div class="a abtn" style="left:682px;top:591px;width:15px;height:15px"></div><svg class="a" style="left:682px;top:591px" width="15" height="15" viewBox="0 0 15 15"><path d="M5.5 3.5 L9.5 7.5 L5.5 11.5" fill="none" stroke="#4d6185" stroke-width="2"/></svg><i class="t st" style="left:3px;top:609px;--w:35">フィル:</i><i class="t st" style="left:3px;top:622px;--w:45">ストローク:</i><i class="t st" style="left:68px;top:609px;--w:38">該当なし</i><i class="t st" style="left:68px;top:622px;--w:38">該当なし</i><i class="t" style="left:129px;top:615px;font-size:11px;--w:10">O:</i><div class="a fld" style="left:141px;top:611px;width:26px;height:18px"></div><i class="t fv" style="left:143px;top:615px;--w:21">1.00</i><div class="a spin" style="left:167px;top:611px;width:10px;height:18px"></div><svg class="a" style="left:167px;top:612px" width="10" height="16" viewBox="0 0 10 16"><path d="M2 5 L5 2 L8 5 M2 11 L5 14 L8 11" fill="none" stroke="#c8c6ba" stroke-width="1.2"/></svg><div class="a sepv" style="left:181px;top:608px;height:26px"></div><svg class="a" style="left:186px;top:613px" width="17" height="14" viewBox="0 0 17 14"><path d="M3 5.5 L1.5 2.5 M6 4 L5.3 0.8 M8.5 3.5 V0.3 M11 4 L11.7 0.8 M14 5.5 L15.5 2.5" stroke="#111" stroke-width="1.2"/><path d="M1 8.5 Q8.5 1.8 16 8.5 Q8.5 14.5 1 8.5Z" fill="#fff" stroke="#111" stroke-width="1.4"/><circle cx="8.5" cy="8.3" r="3.6" fill="#111"/><circle cx="7.6" cy="7.3" r=".9" fill="#ddd"/></svg><svg class="a" style="left:210px;top:612px" width="14" height="17" viewBox="0 0 14 17"><path d="M6.5 8 V4.5 A3.3 3.3 0 0 1 12.8 3.8 L12.5 7" fill="none" stroke="#111" stroke-width="1.5"/><path d="M1.2 9 L10.8 7.5 L12.3 14.2 L2.5 16Z" fill="#efe8a8" stroke="#111" stroke-width="1.3"/><path d="M6.2 10.5 L7.3 13.5" stroke="#222" stroke-width="1.4"/></svg><div class="a" style="left:228px;top:608px;width:87px;height:25px;background:#fff;border:1px solid #7f9db9"></div><i class="t" style="left:233px;top:615px;font-weight:bold;--w:53">·レイヤー 1</i><div class="a abtn" style="left:297px;top:610px;width:17px;height:21px"></div><svg class="a" style="left:297px;top:610px" width="17" height="21" viewBox="0 0 17 21"><path d="M4.5 8.5 L8.5 12.5 L12.5 8.5" fill="none" stroke="#4d6185" stroke-width="2"/></svg><i class="t" style="left:320px;top:614px;--w:84">ドキュメントを保存</i><div class="a sepv" style="left:555px;top:608px;height:26px"></div><i class="t st" style="left:558px;top:607px;--w:11">X:</i><i class="t st" style="left:558px;top:621px;--w:11">Y:</i><i class="t mono" style="left:570px;top:609px;--w:48">-485.71</i><i class="t mono" style="left:570px;top:623px;--w:48">1168.57</i><i class="t st" style="left:627px;top:615px;--w:10">Z:</i><div class="a" style="left:638px;top:611px;width:46px;height:19px;background:#fff;border:1px solid #7f9db9"></div><i class="t mono" style="left:648px;top:615px;--w:20">35%</i><div class="a abtn" style="left:684px;top:611px;width:12px;height:9px"></div><div class="a abtn" style="left:684px;top:620px;width:12px;height:10px"></div><svg class="a" style="left:684px;top:611px" width="12" height="19" viewBox="0 0 12 19"><path d="M3 6 L6 3 L9 6 M3 12 L6 15 L9 12" fill="none" stroke="#4d6185" stroke-width="1.6"/></svg><svg class="a" style="left:700px;top:621px" width="12" height="12" viewBox="0 0 12 12"><rect x="10" y="1" width="2" height="2" fill="#c6c3b2"/><rect x="10" y="1" width="1" height="1" fill="#fff"/><rect x="7" y="4" width="2" height="2" fill="#c6c3b2"/><rect x="7" y="4" width="1" height="1" fill="#fff"/><rect x="10" y="4" width="2" height="2" fill="#c6c3b2"/><rect x="10" y="4" width="1" height="1" fill="#fff"/><rect x="4" y="7" width="2" height="2" fill="#c6c3b2"/><rect x="4" y="7" width="1" height="1" fill="#fff"/><rect x="7" y="7" width="2" height="2" fill="#c6c3b2"/><rect x="7" y="7" width="1" height="1" fill="#fff"/><rect x="10" y="7" width="2" height="2" fill="#c6c3b2"/><rect x="10" y="7" width="1" height="1" fill="#fff"/><rect x="1" y="10" width="2" height="2" fill="#c6c3b2"/><rect x="1" y="10" width="1" height="1" fill="#fff"/><rect x="4" y="10" width="2" height="2" fill="#c6c3b2"/><rect x="4" y="10" width="1" height="1" fill="#fff"/><rect x="7" y="10" width="2" height="2" fill="#c6c3b2"/><rect x="7" y="10" width="1" height="1" fill="#fff"/><rect x="10" y="10" width="2" height="2" fill="#c6c3b2"/><rect x="10" y="10" width="1" height="1" fill="#fff"/></svg>
<!--/RS-->
<div id="bl" class="a"></div>
<div id="br" class="a"></div>
<div id="bb" class="a"></div>
<!--MN-->
<div id="menu" class="a"></div>
<div class="a" style="left:4px;top:127px;width:268px;height:23px;background:#316AC5"></div>
<i class="t" style="left:32px;top:48px;--w:41">新規(<u>N</u>)</i><svg class="a" style="left:263px;top:50px" width="5" height="8" viewBox="0 0 5 8"><path d="M0 0L5 4 0 8Z" fill="#000"/></svg>
<i class="t" style="left:32px;top:69px;--w:41">開く(<u>O</u>)...</i><i class="t sc" style="left:234px;top:70px;--w:33">Ctrl+O</i><svg class="a" style="left:9px;top:67px" width="16" height="16" viewBox="0 0 16 16"><path d="M1.5 2.5h5l1.2 1.8h6.8v10.2h-13z" fill="#d4d9c0" stroke="#5e5f4c" stroke-width="1.1"/><path d="M2 8h12.5v6.5h-12.5z" fill="#e6e9d6" stroke="#6a6b58" stroke-width=".9"/><path d="M3 5.5h10" stroke="#f4f6ea" stroke-width="1.2"/></svg>
<i class="t" style="left:32px;top:88px;--w:105">最近開いたファイル(<u>R</u>)</i><svg class="a" style="left:263px;top:90px" width="5" height="8" viewBox="0 0 5 8"><path d="M0 0L5 4 0 8Z" fill="#000"/></svg>
<i class="t" style="left:32px;top:108px;--w:41">復帰(<u>V</u>)</i><svg class="a" style="left:9px;top:106px" width="16" height="16" viewBox="0 0 16 16"><rect x="0.5" y="0.5" width="15" height="15" rx="1" fill="#4d6cae" stroke="#1e2c5a"/><rect x="2" y="1" width="12" height="2.5" fill="#e01e1e"/><rect x="2" y="3.5" width="12" height="11" fill="#fbfbfb"/><path d="M2 9 L6 4.5 L6.5 7 Q11 7 12 13 L8 13 Q8 10 6.5 10 L6 12Z" fill="#f2dc3a" stroke="#6b6010" stroke-width=".7"/><rect x="5" y="12" width="3" height="3" fill="#333"/></svg>
<i class="t" style="left:32px;top:133px;--w:39;color:#fff">保存(<u>S</u>)</i><i class="t sc" style="left:235px;top:134px;--w:32;color:#fff">Ctrl+S</i><svg class="a" style="left:9px;top:131px" width="16" height="16" viewBox="0 0 16 16"><rect x="0.5" y="0.5" width="15" height="15" rx="1" fill="#4d6cae" stroke="#1e2c5a"/><rect x="2" y="1" width="12" height="2.5" fill="#e01e1e"/><rect x="2" y="3.5" width="12" height="4.5" fill="#fbfbfb"/><rect x="4" y="9" width="8" height="6" fill="#f0f0f0" stroke="#222" stroke-width=".8"/><rect x="5" y="10" width="2" height="4" fill="#3a4a70"/></svg>
<i class="t" style="left:32px;top:157px;--w:110">名前を付けて保存(<u>A</u>)...</i><i class="t sc" style="left:204px;top:158px;--w:63">Shift+Ctrl+S</i><svg class="a" style="left:9px;top:155px" width="16" height="16" viewBox="0 0 16 16"><rect x="0.5" y="0.5" width="15" height="15" rx="1" fill="#4d6cae" stroke="#1e2c5a"/><rect x="2" y="1" width="12" height="2.5" fill="#e01e1e"/><rect x="2" y="3.5" width="12" height="4.5" fill="#fbfbfb"/><rect x="4" y="9" width="8" height="6" fill="#f0f0f0" stroke="#222" stroke-width=".8"/><rect x="5" y="10" width="2" height="4" fill="#3a4a70"/><path d="M7 9 L14 2 L15 3 L8.5 9.5Z" fill="#c49a52" stroke="#5a4020" stroke-width=".6"/></svg>
<i class="t" style="left:32px;top:177px;--w:82">コピーを保存(<u>Y</u>)...</i><i class="t sc" style="left:184px;top:178px;--w:83">Shift+Ctrl+Alt+S</i>
<i class="t" style="left:32px;top:205px;--w:63">インポート(<u>I</u>)...</i><i class="t sc" style="left:239px;top:206px;--w:28">Ctrl+I</i><svg class="a" style="left:9px;top:203px" width="16" height="16" viewBox="0 0 16 16"><path d="M6.5 1.5h5.5l3 3v11h-8.5z" fill="#e6e6e6" stroke="#111" stroke-width="1.2"/><path d="M12 1.5v3h3" fill="#fff" stroke="#111" stroke-width="1.1"/><path d="M0.5 8.5h7" stroke="#111" stroke-width="1.4"/><path d="M7 5.5l3.5 3-3.5 3z" fill="#111"/></svg>
<i class="t" style="left:32px;top:229px;--w:133">ビットマップにエクスポート(<u>E</u>)...</i><i class="t sc" style="left:204px;top:230px;--w:63">Shift+Ctrl+E</i><svg class="a" style="left:9px;top:227px" width="16" height="16" viewBox="0 0 16 16"><path d="M1.5 1.5h5.5l3 3v11h-8.5z" fill="#e6e6e6" stroke="#111" stroke-width="1.2"/><path d="M7 1.5v3h3" fill="#fff" stroke="#111" stroke-width="1.1"/><path d="M6.5 8.5h6" stroke="#111" stroke-width="1.4"/><path d="M12 5.5l3.5 3-3.5 3z" fill="#111"/></svg>
<i class="t" style="left:32px;top:260px;--w:45">印刷(<u>P</u>)...</i><i class="t sc" style="left:235px;top:261px;--w:32">Ctrl+P</i><svg class="a" style="left:9px;top:258px" width="16" height="16" viewBox="0 0 16 16"><rect x="3.5" y="1.5" width="9" height="7" fill="#f2f2f2" stroke="#444" stroke-width="1.1"/><path d="M5.5 4h5M5.5 6h4" stroke="#999" stroke-width=".8"/><rect x="0.8" y="7.8" width="14.4" height="7.4" rx="1.2" fill="#e0e0e0" stroke="#3a3a3a" stroke-width="1.2"/><rect x="2.5" y="10.5" width="11" height="2" fill="#3a3a3a"/></svg>
<i class="t" style="left:32px;top:293px;--w:97">Def のバキューム(<u>U</u>)</i><svg class="a" style="left:9px;top:291px" width="16" height="16" viewBox="0 0 16 16"><rect x="6" y="1" width="8" height="3" fill="#2a2a2a"/><path d="M9 4 Q8.5 6 5 6 Q1 6.5 2 10" fill="none" stroke="#1a2a5a" stroke-width="1.2"/><ellipse cx="7.5" cy="11.2" rx="6.5" ry="4" fill="#e8c030" stroke="#3a2e08" stroke-width="1"/><circle cx="12.3" cy="12.5" r="2.5" fill="#7a6a50" stroke="#111" stroke-width="1"/></svg>
<i class="t" style="left:32px;top:325px;--w:109">ドキュメントの設定(<u>D</u>)...</i><i class="t sc" style="left:204px;top:326px;--w:63">Shift+Ctrl+D</i><svg class="a" style="left:9px;top:323px" width="16" height="16" viewBox="0 0 16 16"><path d="M2.5 1.5h8l3.5 3.5v10.5h-11.5z" fill="#f6f6f6" stroke="#555" stroke-width="1.1"/><path d="M10.5 1.5v3.5h3.5" fill="none" stroke="#777" stroke-width=".9"/><path d="M3.5 4.5 V8 Q3.5 10 6 10.5 V15 M9.5 4.5 V8 Q9.5 10 7 10.5" fill="none" stroke="#4a4a4a" stroke-width="1.6"/><path d="M5.2 4.5 V7.5 Q6.5 8.5 7.8 7.5 V4.5" fill="none" stroke="#4a4a4a" stroke-width="1"/><rect x="5" y="12" width="3" height="3.5" fill="#1a3a78"/></svg>
<i class="t" style="left:32px;top:347px;--w:129">ドキュメントのメタデータ(<u>M</u>)...</i><svg class="a" style="left:9px;top:345px" width="16" height="16" viewBox="0 0 16 16"><rect x="1" y="2" width="14" height="13" fill="#f2f2f2" stroke="#000" stroke-width="1.2"/><rect x="1.6" y="2.6" width="12.8" height="1.8" fill="#b8c0cc"/><path d="M1 5h14" stroke="#000" stroke-width="1"/><path d="M3.5 6.5h5.5l2.5 2.5v5.8h-8z" fill="#ececec" stroke="#000" stroke-width="1"/><path d="M9 6.5v2.5h2.5" fill="#fff" stroke="#000" stroke-width=".9"/></svg>
<i class="t" style="left:32px;top:373px;--w:105">Inkscape の設定(<u>K</u>)...</i><i class="t sc" style="left:204px;top:374px;--w:63">Shift+Ctrl+P</i><svg class="a" style="left:9px;top:371px" width="16" height="16" viewBox="0 0 16 16"><path d="M4.5 4.5 L12 12" stroke="#6a6a6a" stroke-width="3.8"/><path d="M4.5 4.5 L12 12" stroke="#dcdcdc" stroke-width="2"/><circle cx="3.8" cy="3.8" r="2.8" fill="#dcdcdc" stroke="#6a6a6a" stroke-width="1.2"/><circle cx="12.4" cy="12.4" r="2.8" fill="#dcdcdc" stroke="#6a6a6a" stroke-width="1.2"/><path d="M0 2.5 L3.5 3.8 L2.5 0Z" fill="#fff"/><path d="M16 13.5 L12.5 12.4 L13.5 16Z" fill="#fff"/><path d="M14.5 1.5 L9 7" stroke="#6a6a6a" stroke-width="3"/><path d="M14.2 1.8 L9.3 6.7" stroke="#e8e8e8" stroke-width="1.2"/><path d="M8 8 L3.5 12.5" stroke="#3a5ca8" stroke-width="3.4" stroke-linecap="round"/><path d="M7.2 8.5 L4.3 11.4" stroke="#a8c0f0" stroke-width="1" stroke-linecap="round"/></svg>
<i class="t" style="left:32px;top:396px;--w:80">入力デバイス(<u>I</u>)...</i><svg class="a" style="left:9px;top:394px" width="16" height="16" viewBox="0 0 16 16"><rect x="1" y="2" width="14" height="13" fill="#f2f2f2" stroke="#000" stroke-width="1.2"/><rect x="1.6" y="2.6" width="12.8" height="1.8" fill="#b8c0cc"/><path d="M1 5h14" stroke="#000" stroke-width="1"/><path d="M3 13.2h10M3.5 13 L7 6.5 M5 10.5 Q8 10.5 8.5 13" fill="none" stroke="#000" stroke-width="1"/></svg>
<i class="t" style="left:32px;top:428px;--w:46">閉じる(<u>C</u>)</i><i class="t sc" style="left:233px;top:429px;--w:34">Ctrl+W</i><svg class="a" style="left:9px;top:426px" width="16" height="16" viewBox="0 0 16 16"><path d="M2.5 2.5 L13.5 13.5 M13.5 2.5 L2.5 13.5" stroke="#505050" stroke-width="4.4" stroke-linecap="round"/><path d="M2.5 2.5 L13.5 13.5 M13.5 2.5 L2.5 13.5" stroke="#8a8a8a" stroke-width="2.4" stroke-linecap="round"/></svg>
<i class="t" style="left:32px;top:452px;--w:42">終了(<u>Q</u>)</i><i class="t sc" style="left:234px;top:453px;--w:33">Ctrl+Q</i><svg class="a" style="left:9px;top:450px" width="16" height="16" viewBox="0 0 16 16"><rect x="6.5" y="1.5" width="8" height="13" fill="#9a9a96" stroke="#222"/><path d="M7 2 L12 3.5 V14 L7 14Z" fill="#cfcfca"/><rect x="12.5" y="2" width="1.5" height="12" fill="#eee"/><path d="M1 7 h3.5 v-2.5 l4 4 -4 4 v-2.5 h-3.5z" fill="#e01818" stroke="#700" stroke-width=".6"/></svg>
<div class="a" style="left:8px;top:194px;width:260px;height:1px;background:#a8a69c"></div>
<div class="a" style="left:8px;top:250px;width:260px;height:1px;background:#a8a69c"></div>
<div class="a" style="left:8px;top:282px;width:260px;height:1px;background:#a8a69c"></div>
<div class="a" style="left:8px;top:315px;width:260px;height:1px;background:#a8a69c"></div>
<div class="a" style="left:8px;top:418px;width:260px;height:1px;background:#a8a69c"></div>

<!--/MN-->
<script>
document.querySelectorAll('[style*="--w"]').forEach(function(e){var w=parseFloat(getComputedStyle(e).getPropertyValue('--w'));var r=e.getBoundingClientRect().width;if(r>0&&w>0){e.style.transform='scaleX('+(w/r)+')';}});
</script>
</body></html>
